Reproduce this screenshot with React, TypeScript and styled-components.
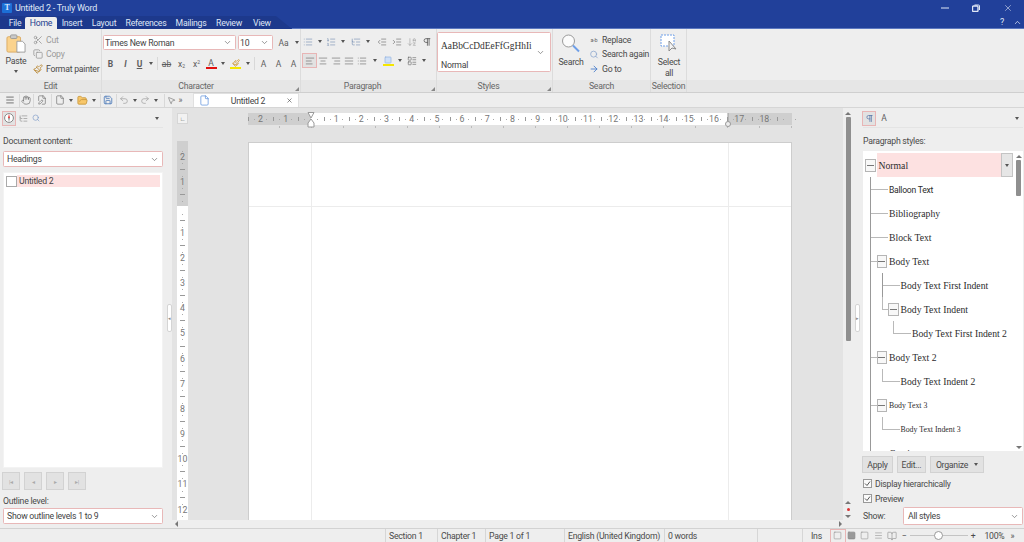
import * as React from "react";
import styled, { createGlobalStyle } from "styled-components";
import {
    AlignCenter,
    AlignJustify,
    AlignLeft,
    AlignRight,
    ArrowDownAZ,
    ArrowRight,
    BookOpen,
    ChevronDown,
    ChevronUp,
    Copy,
    File,
    FileEdit,
    FolderOpen,
    Hand,
    IndentDecrease,
    IndentIncrease,
    LayoutList,
    List,
    ListOrdered,
    ListTree,
    Menu,
    MousePointer2,
    Paintbrush,
    Pilcrow,
    Redo2,
    Save,
    Scissors,
    Search,
    Square,
    Undo2,
    X,
} from "lucide-react";

const UI = `Roboto, "Noto Sans", sans-serif`;
const SERIF = `"Liberation Serif", "Times New Roman", serif`;

const Global = createGlobalStyle`
    html, body { margin: 0; padding: 0; background: #eee; }
    * { box-sizing: border-box; }
`;

const Window = styled.div`
    width: 1024px;
    height: 542px;
    overflow: hidden;
    display: flex;
    flex-direction: column;
    background: #eeeeee;
    color: #4a4a4a;
    font: 8.7px ${UI};
    letter-spacing: -0.25px;
`;

/* ---------- title bar ---------- */
const TitleBar = styled.header`
    height: 29px;
    background: #21409a;
    color: #dfe6f5;
    flex: none;
`;
const TitleRow = styled.div`
    height: 16px;
    display: flex;
    align-items: center;
    padding-left: 2px;
    gap: 3px;
    font-size: 9px;
`;
const AppIcon = styled.span`
    width: 10px;
    height: 10px;
    background: #1c6fd6;
    border-radius: 1px;
    color: #d5e6ff;
    font: bold 8px ${SERIF};
    text-align: center;
    line-height: 10px;
`;
const WindowButtons = styled.div`
    margin-left: auto;
    display: flex;
    align-items: center;
    padding-right: 11px;
    gap: 23px;
    svg { display: block; }
`;
const MenuRow = styled.div`
    height: 13px;
    display: flex;
`;
const TabBand = styled.nav`
    width: 292px;
    height: 13px;
    flex: none;
    background: #1d398c;
    clip-path: polygon(0 0, 276px 0, 292px 100%, 0 100%);
    display: flex;
    align-items: flex-end;
    padding-left: 5px;
`;
const Tab = styled.span<{ $w: number; $active?: boolean }>`
    width: ${(p) => p.$w}px;
    height: 12px;
    line-height: 12px;
    text-align: center;
    color: ${(p) => (p.$active ? "#1f3f8f" : "#dfe6f5")};
    background: ${(p) => (p.$active ? "#eeeeee" : "transparent")};
    border-radius: 2px 2px 0 0;
`;
const HelpButtons = styled.div`
    flex: 1;
    display: flex;
    align-items: center;
    justify-content: flex-end;
    gap: 9px;
    padding-right: 2px;
    font-size: 9px;
    border-bottom: 1px solid #5c78c0;
`;

/* ---------- ribbon ---------- */
const Ribbon = styled.section`
    height: 64px;
    flex: none;
    display: flex;
    background: #eeeeee;
    border-bottom: 1px solid #cfcfcf;
`;
const Group = styled.div<{ $w: number }>`
    width: ${(p) => p.$w}px;
    flex: none;
    display: flex;
    flex-direction: column;
    border-right: 1px solid #dcdcdc;
    position: relative;
`;
const GroupFill = styled.div`
    flex: 1;
    display: flex;
    min-height: 0;
    overflow: hidden;
`;
const GroupLabel = styled.div<{ $shift?: number }>`
    height: 12px;
    flex: none;
    background: #e6e6e6;
    text-align: center;
    line-height: 12px;
    color: #666;
    padding-right: ${(p) => p.$shift ?? 0}px;
`;
const RestFill = styled.div`
    flex: 1;
    display: flex;
    flex-direction: column;
    justify-content: flex-end;
    &::after {
        content: "";
        height: 12px;
        background: #e6e6e6;
    }
`;
const Launcher = styled.i`
    position: absolute;
    right: 1px;
    bottom: 1px;
    width: 0;
    height: 0;
    border-left: 4px solid transparent;
    border-bottom: 4px solid #888;
`;
const BigButton = styled.div<{ $w: number; $ml?: number; $gap: number }>`
    width: ${(p) => p.$w}px;
    margin-left: ${(p) => p.$ml ?? 0}px;
    flex: none;
    display: flex;
    flex-direction: column;
    align-items: center;
    padding-top: 5px;
    line-height: 11px;
    text-align: center;
    color: #4a4a4a;
    svg { display: block; margin-bottom: ${(p) => p.$gap}px; flex: none; }
`;
const PasteCaret = styled.span`
    margin-top: 3px;
    height: 3px;
    display: block;
    border-left: 2.5px solid transparent;
    border-right: 2.5px solid transparent;
    border-top: 3px solid #555;
`;
const SmallCol = styled.div<{ $ml: number }>`
    margin-left: ${(p) => p.$ml}px;
    padding-top: 5px;
    display: flex;
    flex-direction: column;
    gap: 3px;
`;
const SmallRow = styled.div<{ $off?: boolean }>`
    height: 11.5px;
    display: flex;
    align-items: center;
    gap: 3px;
    white-space: nowrap;
    color: ${(p) => (p.$off ? "#9a9a9a" : "#4a4a4a")};
    svg { width: 10px; flex: none; }
`;
const ReplaceGlyph = styled.span`
    width: 10px;
    flex: none;
    font-size: 5.5px;
    text-align: center;
    color: #666;
`;
const Stack = styled.div<{ $top: number; $gap: number; $left?: number }>`
    flex: 1;
    display: flex;
    flex-direction: column;
    padding-top: ${(p) => p.$top}px;
    padding-left: ${(p) => p.$left ?? 0}px;
    gap: ${(p) => p.$gap}px;
`;
const Row = styled.div<{ $left?: number; $gap?: number }>`
    display: flex;
    align-items: center;
    padding-left: ${(p) => p.$left ?? 0}px;
    gap: ${(p) => p.$gap ?? 0}px;
`;
const Btn = styled.span<{ $w: number; $on?: boolean }>`
    width: ${(p) => p.$w}px;
    height: 13px;
    flex: none;
    display: inline-flex;
    align-items: center;
    justify-content: center;
    color: #5d5d5d;
    font-size: 8.5px;
    letter-spacing: 0;
    ${(p) => p.$on && "outline: 1px solid #e8b5b5; background: #e2e2e2;"}
`;
const Letter = styled(Btn)<{ $weight?: number; $italic?: boolean; $line?: string }>`
    font-weight: ${(p) => p.$weight ?? 400};
    font-style: ${(p) => (p.$italic ? "italic" : "normal")};
    text-decoration: ${(p) => p.$line ?? "none"};
`;
const Script = styled.span<{ $up?: boolean }>`
    font-size: 5px;
    margin-top: ${(p) => (p.$up ? -4 : 4)}px;
`;
const Caret = styled.span<{ $w: number }>`
    width: ${(p) => p.$w}px;
    flex: none;
    display: inline-flex;
    justify-content: center;
    &::before {
        content: "";
        border-left: 2.5px solid transparent;
        border-right: 2.5px solid transparent;
        border-top: 3px solid #555;
    }
`;
const Divider = styled.span`
    width: 4px;
    height: 13px;
    flex: none;
    display: inline-flex;
    justify-content: center;
    &::before {
        content: "";
        width: 1px;
        background: #d8d8d8;
    }
`;
const Field = styled.div<{ $w?: number; $h: number; $pad?: number }>`
    ${(p) => (p.$w ? `width: ${p.$w}px; flex: none;` : "")}
    height: ${(p) => p.$h}px;
    background: #fff;
    border: 1px solid #e8b8b8;
    border-radius: 1.5px;
    display: flex;
    align-items: center;
    justify-content: space-between;
    padding: 0 3px 0 ${(p) => p.$pad ?? 3}px;
    color: #444;
    white-space: nowrap;
    svg { color: #777; flex: none; }
`;
const Tint = styled.span<{ $c: string }>`
    display: inline-flex;
    flex-direction: column;
    align-items: center;
    line-height: 8px;
    &::after {
        content: "";
        width: 11px;
        height: 2px;
        background: ${(p) => p.$c};
    }
`;
const StyleBox = styled.div`
    width: 114px;
    height: 40px;
    margin-top: 3px;
    background: #fff;
    border: 1px solid #e8b8b8;
    border-radius: 1.5px;
    display: grid;
    grid-template-columns: 1fr 14px;
    grid-template-rows: 25px 13px;
    align-items: center;
    padding-left: 3px;
    color: #444;
    svg { grid-column: 2; grid-row: 1 / 3; }
`;
const StyleSample = styled.div`
    font: 9.4px ${SERIF};
    letter-spacing: 0;
    color: #333;
    white-space: nowrap;
    grid-column: 1;
    grid-row: 1;
`;
const StyleName = styled.div`
    grid-column: 1;
    grid-row: 2;
`;

/* ---------- quick bar ---------- */
const QuickBar = styled.div`
    height: 15px;
    flex: none;
    display: flex;
    align-items: flex-end;
    border-bottom: 1px solid #d6d6d6;
    padding-left: 2px;
    color: #777;
`;
const QuickIcons = styled.div`
    width: 191px;
    height: 14px;
    display: flex;
    align-items: center;
`;
const DocTab = styled.div`
    width: 106px;
    height: 14px;
    background: #fff;
    border: 1px solid #e0e0e0;
    border-bottom: none;
    display: flex;
    align-items: center;
    padding: 0 5px;
    color: #444;
`;
const DocTabTitle = styled.span`
    flex: 1;
    text-align: center;
`;

/* ---------- workspace ---------- */
const Workspace = styled.main`
    flex: 1;
    min-height: 0;
    display: grid;
    grid-template-columns: 166px 6px 671px 10px 9px 162px;
    grid-template-rows: minmax(0, 1fr);
`;
const Panel = styled.aside<{ $narrow?: boolean }>`
    display: flex;
    flex-direction: column;
    min-width: 0;
    min-height: 0;
    padding: 0 ${(p) => (p.$narrow ? "1px 0 1px" : "3px 4px 3px")};
`;
const PanelIcons = styled.div`
    height: 20px;
    flex: none;
    display: flex;
    align-items: center;
    gap: 3px;
    border-bottom: 1px solid #e4e4e4;
    color: #888;
    margin-bottom: 8px;
    padding-top: 1px;
`;
const PanelPush = styled.span`
    margin-left: auto;
    display: flex;
    padding-right: 3px;
`;
const PanelTitle = styled.div`
    height: 11px;
    line-height: 11px;
    margin-bottom: 4px;
    color: #4a4a4a;
`;
const WhiteList = styled.div`
    flex: 1;
    min-height: 0;
    background: #fff;
    margin-top: 5px;
    padding: 2px;
    border: 1px solid #f3f3f3;
`;
const ContentRow = styled.div`
    display: flex;
    align-items: center;
    height: 12px;
`;
const CheckBoxEmpty = styled.span`
    width: 11px;
    height: 11px;
    flex: none;
    border: 1px solid #aaa;
    background: #fff;
`;
const ContentLabel = styled.span`
    flex: 1;
    height: 12px;
    line-height: 12px;
    padding-left: 2px;
    background: #fde1e1;
    color: #444;
`;
const NavRow = styled.div`
    display: flex;
    gap: 4px;
    margin: 4px 0 0 -1px;
`;
const NavButton = styled.span`
    width: 18px;
    height: 18px;
    background: #e2e2e2;
    border: 1px solid #d2d2d2;
    display: flex;
    align-items: center;
    justify-content: center;
    color: #aaa;
    font-size: 6px;
`;
const OutlineLabel = styled.div`
    margin-top: 4px;
    height: 14px;
    line-height: 14px;
`;
const Gutter = styled.div`
    display: flex;
    align-items: center;
    justify-content: center;
    background: #eee;
`;
const GripHandle = styled.span`
    width: 5px;
    height: 28px;
    background: #fff;
    border: 1px solid #d4d4d4;
    border-radius: 2px;
    display: flex;
    align-items: center;
    justify-content: center;
    color: #888;
    font-size: 5px;
`;

/* ---------- canvas ---------- */
const CanvasColumn = styled.div`
    display: flex;
    flex-direction: column;
    min-height: 0;
`;
const Canvas = styled.div`
    flex: 1;
    min-height: 0;
    overflow: hidden;
    background: #e3e3e3;
    display: grid;
    grid-template-columns: 11px 544px;
    grid-template-rows: 12px 17px 1fr;
    column-gap: 60px;
    padding: 5px 0 0 5px;
`;
const RulerCorner = styled.div`
    width: 11px;
    height: 11px;
    background: #f2f2f2;
    border: 1px solid #d6d6d6;
    display: flex;
    align-items: flex-end;
    justify-content: center;
    color: #555;
    font-size: 6px;
    line-height: 8px;
`;
const HRuler = styled.div`
    position: relative;
    display: flex;
    background: linear-gradient(to right, #cfcfcf 63px, #fff 63px, #fff 480px, #cfcfcf 480px);
`;
const HCell = styled.span`
    width: 25.2px;
    height: 12px;
    flex: none;
    line-height: 12px;
    text-align: center;
    color: #777;
    font-size: 8.8px;
    letter-spacing: 0;
    background:
        linear-gradient(#999, #999) left center / 1px 4px no-repeat,
        linear-gradient(#aaa, #aaa) 25% center / 1px 1px no-repeat,
        linear-gradient(#aaa, #aaa) 75% center / 1px 1px no-repeat;
`;
const TabTicks = styled.div`
    grid-column: 2;
    height: 2px;
    margin-top: 1px;
    background: repeating-linear-gradient(to right, transparent 0 31px, #bbb 31px 32px);
    background-position: 32px 0;
`;
const IndentMark = styled.svg<{ $x: number }>`
    position: absolute;
    left: ${(p) => p.$x}px;
    top: -1px;
`;
const VRuler = styled.div`
    grid-row: 3;
    grid-column: 1;
    margin-top: -1px;
    background: linear-gradient(to bottom, #cfcfcf 65px, #fff 65px);
    display: flex;
    flex-direction: column;
    padding-top: 4px;
    overflow: hidden;
`;
const VCell = styled.span`
    height: 25.2px;
    flex: none;
    line-height: 25px;
    text-align: center;
    color: #777;
    font-size: 8.8px;
    letter-spacing: 0;
    background:
        linear-gradient(#999, #999) center bottom / 5px 1px no-repeat,
        linear-gradient(#aaa, #aaa) center 25% / 1px 1px no-repeat,
        linear-gradient(#aaa, #aaa) center 75% / 1px 1px no-repeat;
`;
const Page = styled.div`
    grid-row: 3;
    grid-column: 2;
    background-color: #fff;
    background-image:
        linear-gradient(#ececec, #ececec),
        linear-gradient(#ececec, #ececec),
        linear-gradient(#ececec, #ececec);
    background-repeat: no-repeat;
    background-size: 1px 100%, 1px 100%, 100% 1px;
    background-position: 62px 0, 479px 0, 0 63px;
    border: 1px solid #cdcdcd;
    border-bottom: none;
`;
const HScroll = styled.div`
    height: 8px;
    flex: none;
    background: #eeeeee;
    display: flex;
    justify-content: space-between;
    align-items: center;
    padding: 0 1px 0 3px;
`;
const Arrow = styled.i<{ $dir: "left" | "right" | "up" | "down" }>`
    width: 0;
    height: 0;
    display: block;
    flex: none;
    ${(p) =>
        p.$dir === "left"
            ? "border-top: 3px solid transparent; border-bottom: 3px solid transparent; border-right: 3px solid #777;"
            : p.$dir === "right"
              ? "border-top: 3px solid transparent; border-bottom: 3px solid transparent; border-left: 3px solid #777;"
              : p.$dir === "up"
                ? "border-left: 3px solid transparent; border-right: 3px solid transparent; border-bottom: 3px solid #777;"
                : "border-left: 3px solid transparent; border-right: 3px solid transparent; border-top: 3px solid #777;"}
`;
const VScroll = styled.div`
    display: flex;
    flex-direction: column;
    align-items: center;
    background: #eeeeee;
    padding-top: 4px;
`;
const VThumb = styled.div`
    width: 5px;
    height: 224px;
    margin-top: 2px;
    background: #8f8f8f;
    border-radius: 1px;
`;
const VScrollFoot = styled.div`
    margin-top: auto;
    margin-bottom: 10px;
    display: flex;
    flex-direction: column;
    align-items: center;
    gap: 4px;
`;
const RedDot = styled.span`
    width: 3px;
    height: 3px;
    border-radius: 50%;
    background: #d33;
`;

/* ---------- styles tree ---------- */
const TreeBox = styled.div`
    height: 300px;
    flex: none;
    background: #fff;
    display: flex;
    overflow: hidden;
    padding-left: 2px;
`;
const TreeRows = styled.div`
    flex: 1;
    min-width: 0;
    padding-top: 2px;
`;
const TreeRowBox = styled.div`
    height: 24px;
    display: flex;
    align-items: stretch;
`;
const line = "#b9b9b9";
const Guide = styled.span<{ $kind: "pipe" | "tee" | "elbow" | "blank" }>`
    width: 11.5px;
    flex: none;
    background-repeat: no-repeat;
    ${(p) =>
        p.$kind === "pipe" &&
        `background-image: linear-gradient(#999,#999); background-size: 1px 100%; background-position: 5px 0;`}
    ${(p) =>
        p.$kind === "tee" &&
        `background-image: linear-gradient(#999,#999), linear-gradient(${line},${line}); background-size: 1px 100%, 7px 1px; background-position: 5px 0, 5px 12px;`}
    ${(p) =>
        p.$kind === "elbow" &&
        `background-image: linear-gradient(${line},${line}), linear-gradient(${line},${line}); background-size: 1px 13px, 7px 1px; background-position: 5px 0, 5px 12px;`}
`;
const NodeBox = styled.span`
    width: 11.5px;
    flex: none;
    display: flex;
    align-items: center;
    padding-right: 1px;
    &::before {
        content: "";
        width: 10.5px;
        height: 11px;
        border: 1px solid #b5b5b5;
        background: linear-gradient(#777, #777) center / 7px 1px no-repeat #f8f8f8;
    }
`;
const NodeLine = styled.span`
    width: 11.5px;
    flex: none;
    background: linear-gradient(${line}, ${line}) 0 12px / 100% 1px no-repeat;
`;
const RowText = styled.span<{ $size: number; $sans?: boolean; $on?: boolean }>`
    flex: ${(p) => (p.$on ? 1 : "none")};
    margin-left: ${(p) => (p.$on ? 0 : 1)}px;
    height: 24px;
    font: ${(p) => p.$size}px/26px ${(p) => (p.$sans ? UI : SERIF)};
    letter-spacing: ${(p) => (p.$sans ? "-0.25px" : "0")};
    color: #2c2c2c;
    white-space: nowrap;
    ${(p) => p.$on && "background: #fde1e1; padding-left: 2px;"}
`;
const RowDrop = styled.span`
    width: 12px;
    flex: none;
    background: #e6e6e6;
    border: 1px solid #c4c4c4;
    display: flex;
    align-items: center;
    justify-content: center;
`;
const SelectedRow = styled.div`
    flex: 1;
    display: flex;
    margin-right: 1px;
`;
const TreeScroll = styled.div`
    width: 9px;
    flex: none;
    display: flex;
    flex-direction: column;
    align-items: center;
    padding: 4px 0 2px;
`;
const TreeThumb = styled.div`
    width: 5px;
    height: 36px;
    margin-top: 2px;
    border-radius: 1px;
    background: #8f8f8f;
`;
const TreeScrollEnd = styled.div`
    margin-top: auto;
`;
const ActionRow = styled.div`
    display: flex;
    gap: 4px;
    margin: 5px 0 0 -1px;
`;
const ActionBtn = styled.span<{ $w: number }>`
    width: ${(p) => p.$w}px;
    height: 17px;
    background: #e2e2e2;
    border: 1px solid #d2d2d2;
    display: flex;
    align-items: center;
    justify-content: center;
    gap: 5px;
    color: #4a4a4a;
`;
const CheckRow = styled.div`
    display: flex;
    align-items: center;
    gap: 3px;
    height: 15px;
    svg { display: block; }
`;
const Checks = styled.div`
    margin-top: 3px;
`;
const ShowRow = styled.div`
    display: flex;
    align-items: center;
    justify-content: space-between;
    margin-top: 1px;
`;

/* ---------- status ---------- */
const StatusBar = styled.footer`
    height: 14px;
    flex: none;
    border-top: 1px solid #d2d2d2;
    display: flex;
    align-items: center;
    padding-left: 385px;
    color: #4a4a4a;
`;
const StatusCell = styled.span<{ $w: number; $pad?: number }>`
    width: ${(p) => p.$w}px;
    flex: none;
    height: 13px;
    line-height: 14px;
    border-left: 1px solid #d6d6d6;
    padding-left: ${(p) => p.$pad ?? 3}px;
    white-space: nowrap;
`;
const ViewBtns = styled.div`
    display: flex;
    align-items: center;
    width: 71px;
    color: #888;
    svg { display: block; }
`;
const ViewBtn = styled.span<{ $on?: boolean }>`
    width: 13.5px;
    height: 12px;
    display: flex;
    align-items: center;
    justify-content: center;
    ${(p) => p.$on && "outline: 1px solid #e8b5b5;"}
`;
const ZoomSlider = styled.div`
    width: 58px;
    height: 1px;
    background: #c4c4c4;
    margin: 0 3px;
    display: flex;
    align-items: center;
    justify-content: center;
    &::before {
        content: "";
        width: 7px;
        height: 7px;
        border-radius: 50%;
        border: 1px solid #999;
        background: #fff;
    }
`;
const ZoomValue = styled.span`
    margin-left: 9px;
    line-height: 14px;
`;
const ZoomMore = styled.span`
    margin-left: 6px;
`;

const quiet = { strokeWidth: 1.4 };

const HRULER = ["2", "1", "", ...Array.from({ length: 18 }, (_, i) => String(i + 1)), ""];
const VRULER = ["2", "1", "", ...Array.from({ length: 12 }, (_, i) => String(i + 1))];

interface TreeItem {
    name: string;
    guides: ("pipe" | "tee" | "elbow" | "blank")[];
    box?: boolean;
    size?: number;
    sans?: boolean;
}

const TREE: TreeItem[] = [
    { name: "Balloon Text", guides: ["tee"], size: 8.6, sans: true },
    { name: "Bibliography", guides: ["tee"] },
    { name: "Block Text", guides: ["tee"] },
    { name: "Body Text", guides: ["tee"], box: true },
    { name: "Body Text First Indent", guides: ["pipe", "tee"] },
    { name: "Body Text Indent", guides: ["pipe", "elbow"], box: true },
    { name: "Body Text First Indent 2", guides: ["pipe", "blank", "elbow"] },
    { name: "Body Text 2", guides: ["tee"], box: true },
    { name: "Body Text Indent 2", guides: ["pipe", "elbow"] },
    { name: "Body Text 3", guides: ["tee"], box: true, size: 7.8 },
    { name: "Body Text Indent 3", guides: ["pipe", "elbow"], size: 7.8 },
    { name: "Caption", guides: ["tee"], size: 9.7 },
];

const Clipboard: React.FC = () => (
    <svg width="20" height="19" viewBox="0 0 22 21">
        <rect x="1" y="3" width="15" height="17" rx="1.5" fill="#fbd38d" stroke="#d9a860" />
        <rect x="5" y="1" width="7" height="4" rx="1" fill="#c9c9c9" stroke="#999" />
        <path d="M12 8h6l3 3v9h-9z" fill="#fff" stroke="#999" />
    </svg>
);

const BigSearch: React.FC = () => (
    <svg width="20" height="19" viewBox="0 0 20 19">
        <circle cx="7.5" cy="7" r="6" fill="#fbfbfb" stroke="#9a9a9a" />
        <path d="M12 11.5l6 6" stroke="#6f9fe8" strokeWidth="2" />
    </svg>
);

const SelectAll: React.FC = () => (
    <svg width="18" height="19" viewBox="0 0 18 19">
        <rect x="1" y="1" width="13" height="11" fill="#fff" stroke="#6f9fe8" strokeDasharray="2 1" />
        <path d="M9 7l0 10 3-3 4 1z" fill="#f4f4f4" stroke="#8a8a8a" />
    </svg>
);

const Compass: React.FC = () => (
    <svg width="10" height="10" viewBox="0 0 10 10">
        <circle cx="5" cy="5" r="4.4" fill="#fff" stroke="#888" />
        <path d="M5 1l1 4H4z" fill="#d33" />
        <path d="M5 9l1-4H4z" fill="#999" />
    </svg>
);

const Tree: React.FC = () => (
    <TreeBox>
        <TreeRows>
            <TreeRowBox>
                <NodeBox />
                <SelectedRow>
                    <RowText $size={9.7} $on>
                        Normal
                    </RowText>
                    <RowDrop>
                        <Caret $w={8} />
                    </RowDrop>
                </SelectedRow>
            </TreeRowBox>
            {TREE.map((item) => (
                <TreeRowBox key={item.name}>
                    {item.guides.map((kind, i) => (
                        <Guide key={i} $kind={kind} />
                    ))}
                    {item.box ? <NodeBox /> : <NodeLine />}
                    <RowText $size={item.size ?? 9.7} $sans={item.sans}>
                        {item.name}
                    </RowText>
                </TreeRowBox>
            ))}
        </TreeRows>
        <TreeScroll>
            <Arrow $dir="up" />
            <TreeThumb />
            <TreeScrollEnd>
                <Arrow $dir="down" />
            </TreeScrollEnd>
        </TreeScroll>
    </TreeBox>
);

const CheckMark: React.FC = () => (
    <svg width="9" height="9" viewBox="0 0 9 9">
        <rect x="0.5" y="0.5" width="8" height="8" fill="#fafafa" stroke="#999" />
        <path d="M2 4.5l2 2 3-4" fill="none" stroke="#555" />
    </svg>
);

const App: React.FC = () => {
    return (
        <Window>
            <Global />
            <TitleBar>
                <TitleRow>
                    <AppIcon>T</AppIcon>
                    <span>Untitled 2 - Truly Word</span>
                    <WindowButtons>
                        <svg width="8" height="8" viewBox="0 0 8 8">
                            <path d="M0 4h8" stroke="#dfe6f5" />
                        </svg>
                        <svg width="8" height="8" viewBox="0 0 8 8" fill="none" stroke="#dfe6f5">
                            <rect x="0.5" y="2" width="5.5" height="5.5" rx="1" strokeWidth="1.4" />
                            <path d="M2.5 1h4a1 1 0 0 1 1 1v4" />
                        </svg>
                        <X size={10} strokeWidth={1.4} />
                    </WindowButtons>
                </TitleRow>
                <MenuRow>
                    <TabBand>
                        <Tab $w={20}>File</Tab>
                        <Tab $w={32} $active>
                            Home
                        </Tab>
                        <Tab $w={30}>Insert</Tab>
                        <Tab $w={34}>Layout</Tab>
                        <Tab $w={50}>References</Tab>
                        <Tab $w={40}>Mailings</Tab>
                        <Tab $w={36}>Review</Tab>
                        <Tab $w={30}>View</Tab>
                    </TabBand>
                    <HelpButtons>
                        <span>?</span>
                        <ChevronUp size={9} />
                    </HelpButtons>
                </MenuRow>
            </TitleBar>

            <Ribbon>
                <Group $w={102}>
                    <GroupFill>
                        <BigButton $w={30} $ml={1} $gap={3}>
                            <Clipboard />
                            Paste
                            <PasteCaret />
                        </BigButton>
                        <SmallCol $ml={2}>
                            <SmallRow $off>
                                <Scissors size={10} />
                                Cut
                            </SmallRow>
                            <SmallRow $off>
                                <Copy size={10} />
                                Copy
                            </SmallRow>
                            <SmallRow>
                                <Paintbrush size={10} color="#b8862f" />
                                Format painter
                            </SmallRow>
                        </SmallCol>
                    </GroupFill>
                    <GroupLabel>Edit</GroupLabel>
                </Group>

                <Group $w={199}>
                    <Stack $top={6} $gap={7} $left={1}>
                        <Row $gap={2}>
                            <Field $w={133} $h={15} $pad={1}>
                                Times New Roman
                                <ChevronDown size={9} />
                            </Field>
                            <Field $w={35} $h={15} $pad={1}>
                                10
                                <ChevronDown size={9} />
                            </Field>
                            <Btn $w={17}>Aa</Btn>
                            <Caret $w={6} />
                        </Row>
                        <Row>
                            <Letter $w={15} $weight={700}>
                                B
                            </Letter>
                            <Letter $w={15} $italic $weight={700}>
                                I
                            </Letter>
                            <Letter $w={13} $weight={700} $line="underline">
                                U
                            </Letter>
                            <Caret $w={9} />
                            <Divider />
                            <Letter $w={15} $line="line-through">
                                ab
                            </Letter>
                            <Btn $w={15}>
                                x<Script>2</Script>
                            </Btn>
                            <Btn $w={15}>
                                x<Script $up>2</Script>
                            </Btn>
                            <Btn $w={14}>
                                <Tint $c="#e01010">A</Tint>
                            </Btn>
                            <Caret $w={10} />
                            <Btn $w={15}>
                                <Tint $c="#f5e600">
                                    <Paintbrush size={8} color="#c98a1a" />
                                </Tint>
                            </Btn>
                            <Caret $w={9} />
                            <Divider />
                            <Btn $w={15}>A</Btn>
                            <Btn $w={15}>A</Btn>
                            <Btn $w={15}>A</Btn>
                        </Row>
                    </Stack>
                    <GroupLabel $shift={10}>Character</GroupLabel>
                    <Launcher />
                </Group>

                <Group $w={136}>
                    <Stack $top={6} $gap={6}>
                        <Row>
                            <Btn $w={14}>
                                <List size={10} {...quiet} color="#6d86ad" />
                            </Btn>
                            <Caret $w={9} />
                            <Btn $w={13}>
                                <ListOrdered size={10} {...quiet} color="#6d86ad" />
                            </Btn>
                            <Caret $w={12} />
                            <Btn $w={13}>
                                <ListTree size={10} {...quiet} color="#6d86ad" />
                            </Btn>
                            <Caret $w={12} />
                            <Btn $w={15}>
                                <IndentDecrease size={10} {...quiet} />
                            </Btn>
                            <Btn $w={15}>
                                <IndentIncrease size={10} {...quiet} />
                            </Btn>
                            <Btn $w={15}>
                                <ArrowDownAZ size={10} {...quiet} color="#999" />
                            </Btn>
                            <Btn $w={15}>
                                <Pilcrow size={10} />
                            </Btn>
                        </Row>
                        <Row $left={2}>
                            <Btn $w={13} $on>
                                <AlignLeft size={10} {...quiet} />
                            </Btn>
                            <Btn $w={13}>
                                <AlignCenter size={10} {...quiet} />
                            </Btn>
                            <Btn $w={13}>
                                <AlignRight size={10} {...quiet} />
                            </Btn>
                            <Btn $w={13}>
                                <AlignJustify size={10} {...quiet} />
                            </Btn>
                            <Btn $w={14}>
                                <List size={10} {...quiet} />
                            </Btn>
                            <Caret $w={12} />
                            <Btn $w={14}>
                                <Tint $c="#f5e600">
                                    <Square size={8} fill="#cfe0f7" color="#8fb0e0" />
                                </Tint>
                            </Btn>
                            <Caret $w={10} />
                            <Btn $w={14}>
                                <LayoutList size={10} {...quiet} />
                            </Btn>
                            <Caret $w={9} />
                        </Row>
                    </Stack>
                    <GroupLabel $shift={12}>Paragraph</GroupLabel>
                    <Launcher />
                </Group>

                <Group $w={116}>
                    <GroupFill>
                        <StyleBox>
                            <StyleSample>AaBbCcDdEeFfGgHhIi</StyleSample>
                            <ChevronDown size={9} color="#777" />
                            <StyleName>Normal</StyleName>
                        </StyleBox>
                    </GroupFill>
                    <GroupLabel $shift={12}>Styles</GroupLabel>
                    <Launcher />
                </Group>

                <Group $w={98}>
                    <GroupFill>
                        <BigButton $w={32} $ml={2} $gap={4}>
                            <BigSearch />
                            Search
                        </BigButton>
                        <SmallCol $ml={2}>
                            <SmallRow>
                                <ReplaceGlyph>a-b</ReplaceGlyph>
                                Replace
                            </SmallRow>
                            <SmallRow>
                                <Search size={9} color="#8aa4cc" />
                                Search again
                            </SmallRow>
                            <SmallRow>
                                <ArrowRight size={10} color="#3f76c9" />
                                Go to
                            </SmallRow>
                        </SmallCol>
                    </GroupFill>
                    <GroupLabel>Search</GroupLabel>
                </Group>

                <Group $w={36}>
                    <GroupFill>
                        <BigButton $w={36} $gap={4}>
                            <SelectAll />
                            Select
                            <br />
                            all
                        </BigButton>
                    </GroupFill>
                    <GroupLabel>Selection</GroupLabel>
                </Group>
                <RestFill />
            </Ribbon>

            <QuickBar>
                <QuickIcons>
                    <Btn $w={15}>
                        <Menu size={10} />
                    </Btn>
                    <Divider />
                    <Btn $w={10}>
                        <Hand size={10} {...quiet} />
                    </Btn>
                    <Divider />
                    <Btn $w={14}>
                        <FileEdit size={10} {...quiet} />
                    </Btn>
                    <Divider />
                    <Btn $w={13}>
                        <File size={10} {...quiet} />
                    </Btn>
                    <Caret $w={9} />
                    <Btn $w={14}>
                        <FolderOpen size={11} fill="#f8c76a" color="#c99a42" />
                    </Btn>
                    <Caret $w={9} />
                    <Divider />
                    <Btn $w={12}>
                        <Save size={10} color="#4a78b8" />
                    </Btn>
                    <Divider />
                    <Btn $w={12}>
                        <Undo2 size={10} color="#aaa" />
                    </Btn>
                    <Caret $w={10} />
                    <Btn $w={10}>
                        <Redo2 size={10} color="#aaa" />
                    </Btn>
                    <Caret $w={12} />
                    <Divider />
                    <Btn $w={10}>
                        <MousePointer2 size={9} color="#888" />
                    </Btn>
                    <Btn $w={9}>»</Btn>
                </QuickIcons>
                <DocTab>
                    <File size={11} color="#4a84d8" {...quiet} />
                    <DocTabTitle>Untitled 2</DocTabTitle>
                    <X size={7} />
                </DocTab>
            </QuickBar>

            <Workspace>
                <Panel>
                    <PanelIcons>
                        <Btn $w={12} $on>
                            <Compass />
                        </Btn>
                        <Btn $w={10}>
                            <ListTree size={9} color="#999" />
                        </Btn>
                        <Btn $w={10}>
                            <Search size={8} color="#7f9cc8" />
                        </Btn>
                        <PanelPush>
                            <Caret $w={6} />
                        </PanelPush>
                    </PanelIcons>
                    <PanelTitle>Document content:</PanelTitle>
                    <Field $h={16}>
                        Headings
                        <ChevronDown size={9} />
                    </Field>
                    <WhiteList>
                        <ContentRow>
                            <CheckBoxEmpty />
                            <ContentLabel>Untitled 2</ContentLabel>
                        </ContentRow>
                    </WhiteList>
                    <NavRow>
                        <NavButton>|◂</NavButton>
                        <NavButton>◂</NavButton>
                        <NavButton>▸</NavButton>
                        <NavButton>▸|</NavButton>
                    </NavRow>
                    <OutlineLabel>Outline level:</OutlineLabel>
                    <Field $h={16}>
                        Show outline levels 1 to 9
                        <ChevronDown size={9} />
                    </Field>
                </Panel>

                <Gutter>
                    <GripHandle>◂</GripHandle>
                </Gutter>

                <CanvasColumn>
                    <Canvas>
                        <RulerCorner>∟</RulerCorner>
                        <HRuler>
                            {HRULER.map((n, i) => (
                                <HCell key={i}>{n}</HCell>
                            ))}
                            <IndentMark $x={59} width="8" height="16" viewBox="0 0 8 16" fill="#fff" stroke="#999">
                                <path d="M1 .5h6L4 6z" />
                                <path d="M4 7L7 11v4H1v-4z" />
                            </IndentMark>
                            <IndentMark $x={476} width="8" height="16" viewBox="0 0 8 16" fill="#eee" stroke="#999">
                                <path d="M4 1v9" fill="none" />
                                <circle cx="4" cy="12" r="2.5" />
                            </IndentMark>
                        </HRuler>
                        <TabTicks />
                        <VRuler>
                            {VRULER.map((n, i) => (
                                <VCell key={i}>{n}</VCell>
                            ))}
                        </VRuler>
                        <Page />
                    </Canvas>
                    <HScroll>
                        <Arrow $dir="left" />
                        <Arrow $dir="right" />
                    </HScroll>
                </CanvasColumn>

                <VScroll>
                    <Arrow $dir="up" />
                    <VThumb />
                    <VScrollFoot>
                        <Arrow $dir="up" />
                        <RedDot />
                        <Arrow $dir="down" />
                    </VScrollFoot>
                </VScroll>

                <Gutter>
                    <GripHandle>▸</GripHandle>
                </Gutter>

                <Panel $narrow>
                    <PanelIcons>
                        <Btn $w={12} $on>
                            <Pilcrow size={9} color="#5577aa" />
                        </Btn>
                        <Btn $w={12}>A</Btn>
                        <PanelPush>
                            <Caret $w={6} />
                        </PanelPush>
                    </PanelIcons>
                    <PanelTitle>Paragraph styles:</PanelTitle>
                    <Tree />
                    <ActionRow>
                        <ActionBtn $w={31}>Apply</ActionBtn>
                        <ActionBtn $w={29}>Edit...</ActionBtn>
                        <ActionBtn $w={54}>
                            Organize
                            <Caret $w={5} />
                        </ActionBtn>
                    </ActionRow>
                    <Checks>
                        <CheckRow>
                            <CheckMark />
                            Display hierarchically
                        </CheckRow>
                        <CheckRow>
                            <CheckMark />
                            Preview
                        </CheckRow>
                    </Checks>
                    <ShowRow>
                        Show:
                        <Field $w={120} $h={18} $pad={4}>
                            All styles
                            <ChevronDown size={9} />
                        </Field>
                    </ShowRow>
                </Panel>
            </Workspace>

            <StatusBar>
                <StatusCell $w={52}>Section 1</StatusCell>
                <StatusCell $w={48}>Chapter 1</StatusCell>
                <StatusCell $w={79}>Page 1 of 1</StatusCell>
                <StatusCell $w={100}>English (United Kingdom)</StatusCell>
                <StatusCell $w={93}>0 words</StatusCell>
                <StatusCell $w={45} />
                <StatusCell $w={29} $pad={8}>
                    Ins
                </StatusCell>
                <ViewBtns>
                    <ViewBtn $on>
                        <Square size={9} {...quiet} />
                    </ViewBtn>
                    <ViewBtn>
                        <Square size={9} fill="#999" />
                    </ViewBtn>
                    <ViewBtn>
                        <Square size={9} {...quiet} />
                    </ViewBtn>
                    <ViewBtn>
                        <Menu size={9} {...quiet} />
                    </ViewBtn>
                    <ViewBtn>
                        <BookOpen size={10} {...quiet} />
                    </ViewBtn>
                </ViewBtns>
                <span>−</span>
                <ZoomSlider />
                <span>+</span>
                <ZoomValue>100%</ZoomValue>
                <ZoomMore>»</ZoomMore>
            </StatusBar>
        </Window>
    );
};

export default App;
